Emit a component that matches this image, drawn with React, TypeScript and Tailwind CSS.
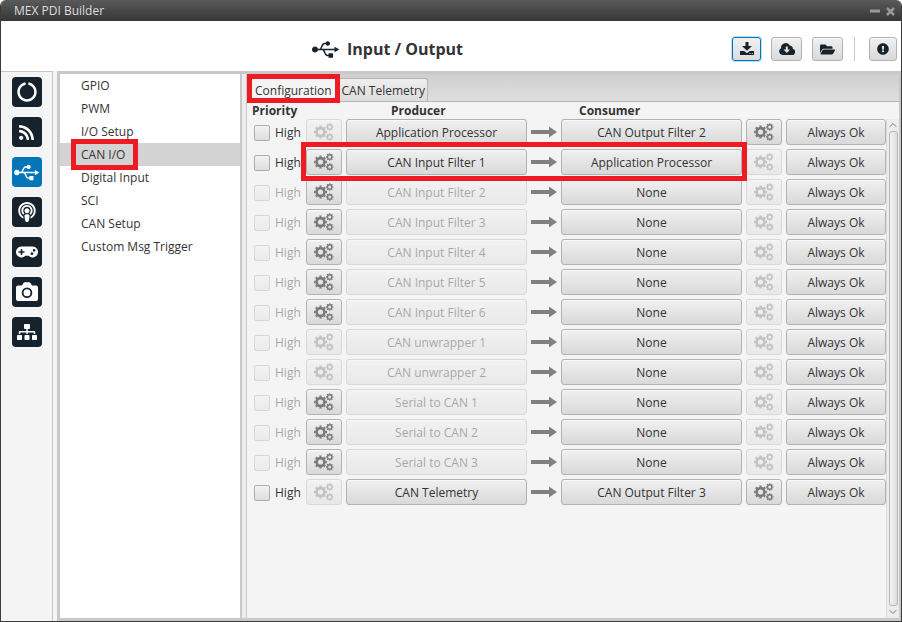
import { useState } from 'react';
import type { ReactNode } from 'react';
import clsx from 'clsx';
import { ChevronDown, ChevronUp } from 'lucide-react';
import {
  FaCircleNotch,
  FaExclamationCircle,
  FaFolderOpen,
  FaGamepad,
  FaPodcast,
  FaRss,
  FaSitemap,
  FaUsb,
} from 'react-icons/fa';

interface Route {
  producer: string;
  consumer: string;
  // which parts of the row can be edited
  producerEnabled?: boolean;
  producerConfig?: boolean;
  consumerConfig?: boolean;
  marked?: boolean;
}

const routes: Route[] = [
  { producer: 'Application Processor', consumer: 'CAN Output Filter 2', producerEnabled: true, consumerConfig: true },
  { producer: 'CAN Input Filter 1', consumer: 'Application Processor', producerEnabled: true, producerConfig: true, marked: true },
  { producer: 'CAN Input Filter 2', consumer: 'None', producerConfig: true },
  { producer: 'CAN Input Filter 3', consumer: 'None', producerConfig: true },
  { producer: 'CAN Input Filter 4', consumer: 'None', producerConfig: true },
  { producer: 'CAN Input Filter 5', consumer: 'None', producerConfig: true },
  { producer: 'CAN Input Filter 6', consumer: 'None', producerConfig: true },
  { producer: 'CAN unwrapper 1', consumer: 'None' },
  { producer: 'CAN unwrapper 2', consumer: 'None' },
  { producer: 'Serial to CAN 1', consumer: 'None', producerConfig: true },
  { producer: 'Serial to CAN 2', consumer: 'None', producerConfig: true },
  { producer: 'Serial to CAN 3', consumer: 'None', producerConfig: true },
  { producer: 'CAN Telemetry', consumer: 'CAN Output Filter 3', producerEnabled: true, consumerConfig: true },
];

const sections = ['GPIO', 'PWM', 'I/O Setup', 'CAN I/O', 'Digital Input', 'SCI', 'CAN Setup', 'Custom Msg Trigger'];

function CameraIcon() {
  return (
    <svg width="22" height="20" viewBox="0 0 22 20" fill="currentColor" aria-hidden="true">
      <path d="M2 3.500h4L7.500 1Q8 0.300 9 0.300h4q1 0 1.500 0.700L16 3.500h4q2 0 2 2V17q0 2-2 2H2q-2 0-2-2V5.500q0-2 2-2z" />
      <circle cx="11" cy="10.800" r="4.400" fill="none" stroke="#16222c" strokeWidth="1.800" />
    </svg>
  );
}

// Three gears, each a ring with eight dashes around it as teeth
function GearsIcon() {
  return (
    <svg width="20" height="18" viewBox="0 0 20 18" fill="none" stroke="#7a7a7a" aria-hidden="true">
      <circle cx="6.500" cy="9" r="3.900" strokeWidth="2.600" />
      <circle cx="6.500" cy="9" r="5.700" strokeWidth="1.700" pathLength="16" strokeDasharray="1 1" strokeDashoffset="0.500" />
      <circle cx="15.700" cy="4" r="2.200" strokeWidth="1.400" />
      <circle cx="15.700" cy="4" r="3.200" strokeWidth="1.100" pathLength="16" strokeDasharray="1 1" strokeDashoffset="0.500" />
      <circle cx="15.700" cy="14" r="2.200" strokeWidth="1.400" />
      <circle cx="15.700" cy="14" r="3.200" strokeWidth="1.100" pathLength="16" strokeDasharray="1 1" strokeDashoffset="0.500" />
    </svg>
  );
}

function DownloadIcon() {
  return (
    <svg width="14" height="14" viewBox="0 0 14 14" fill="currentColor" aria-hidden="true">
      <path d="M5.500 0h3v4H12L7 8.800 2 4h3.500z" />
      <path fillRule="evenodd" d="M0 9h4.200L7 11.200 9.800 9H14v4H0zM9.500 11v1h1v-1zM11.800 11v1h1v-1z" />
    </svg>
  );
}

function CloudDownloadIcon() {
  return (
    <svg width="16" height="12" viewBox="0 0 16 12" fill="currentColor" aria-hidden="true">
      <path
        fillRule="evenodd"
        d="M3.600 12A3.600 3.600 0 0 1 2.100 5.200 4.700 4.700 0 0 1 11 2.800a2.600 2.600 0 0 1 2.800 3.100A3.100 3.100 0 0 1 12.800 12zM6.800 3.500v3H4.500L7.800 10l3.300-3.500H8.800v-3z"
      />
    </svg>
  );
}

function ArrowIcon() {
  return (
    <svg width="26" height="12" viewBox="0 0 26 12" fill="#808080" aria-hidden="true">
      <path d="M0 4h18V0.500L26 6l-8 5.500V8H0z" />
    </svg>
  );
}

const modules = [
  { label: 'Platform', icon: <FaCircleNotch size={20} /> },
  { label: 'Sensors', icon: <FaRss size={17} /> },
  { label: 'Input / Output', icon: <FaUsb size={25} /> },
  { label: 'Communications', icon: <FaPodcast size={20} /> },
  { label: 'Stick', icon: <FaGamepad size={22} /> },
  { label: 'Camera', icon: <CameraIcon /> },
  { label: 'Hierarchy', icon: <FaSitemap size={20} /> },
];

function Marker({ className }: { className: string }) {
  return <span className={clsx('pointer-events-none absolute z-10 border-[5px] border-[#ed1c24]', className)} />;
}

interface PushButtonProps {
  children: ReactNode;
  className?: string;
  label?: string;
  disabled?: boolean;
}

function PushButton({ children, className, label, disabled }: PushButtonProps) {
  return (
    <button
      type="button"
      aria-label={label}
      disabled={disabled}
      className={clsx(
        'flex items-center justify-center rounded-[3px] border border-[#b2b2b2] bg-linear-to-b from-[#f0f0f0] to-[#d9d9d9] shadow-[inset_0_1px_0_#fafafa] disabled:opacity-40',
        className,
      )}
    >
      {children}
    </button>
  );
}

function ConfigButton({ label, enabled }: { label: string; enabled?: boolean }) {
  return (
    <PushButton label={label} disabled={!enabled} className="h-[26px] w-9 shrink-0">
      <GearsIcon />
    </PushButton>
  );
}

function RouteRow({ route }: { route: Route }) {
  return (
    <li className="flex gap-1">
      <label
        className={clsx('flex h-[26px] w-12 shrink-0 items-center gap-[5px] pt-px', !route.producerEnabled && 'opacity-40')}
      >
        <input
          type="checkbox"
          disabled={!route.producerEnabled}
          className="size-4 appearance-none rounded-[2px] border border-[#adadad] bg-linear-to-b from-[#f2f2f2] to-[#dedede] checked:bg-[#0275b8]"
        />
        High
      </label>
      <div className="relative flex flex-1 gap-1">
        <ConfigButton label={`Configure ${route.producer}`} enabled={route.producerConfig} />
        <PushButton className="h-[26px] flex-1 pt-px" disabled={!route.producerEnabled}>
          {route.producer}
        </PushButton>
        <span className="flex h-[25px] w-[26px] shrink-0 items-center">
          <ArrowIcon />
        </span>
        <PushButton className="h-[26px] flex-1 pt-px">{route.consumer}</PushButton>
        {route.marked && <Marker className="-inset-x-[5px] -top-[7px] -bottom-[6px]" />}
      </div>
      <ConfigButton label={`Configure ${route.consumer}`} enabled={route.consumerConfig} />
      <PushButton className="h-[26px] w-[100px] shrink-0 pt-px">Always Ok</PushButton>
    </li>
  );
}

export default function App() {
  const [section, setSection] = useState('CAN I/O');
  const [module, setModule] = useState('Input / Output');

  return (
    <div className="flex h-screen flex-col overflow-hidden rounded-t-md border border-t-0 border-[#3c3c3c] bg-[#f4f4f4] font-['Open_Sans','Noto_Sans',sans-serif] text-xs text-[#333]">
      {/* Title bar */}
      <div className="flex h-[21px] shrink-0 items-center justify-between bg-linear-to-b from-[#5a5a5a] to-[#363636] pt-px pr-1.5 pl-[13px] text-[#dedede]">
        <span>MEX PDI Builder</span>
        <div className="flex items-center gap-1.5 text-[#999]">
          <button type="button" aria-label="Minimize">
            <svg width="10" height="10" viewBox="0 0 10 10" stroke="currentColor" strokeWidth="3">
              <path d="M0 5h10" />
            </svg>
          </button>
          <button type="button" aria-label="Close">
            <svg width="9" height="9" viewBox="0 0 9 9" stroke="currentColor" strokeWidth="2.500">
              <path d="M1 1l7 7M8 1L1 8" />
            </svg>
          </button>
        </div>
      </div>

      {/* Header */}
      <header className="flex h-[50px] shrink-0 items-center bg-white pt-1.5 pr-1">
        <h1 className="flex flex-1 items-center justify-center gap-2 pl-[42px] text-base font-bold">
          <FaUsb size={27} className="text-[#16222c]" />
          Input / Output
        </h1>
        <div className="flex items-center text-[#16222c]">
          <button
            type="button"
            aria-label="Save"
            className="flex h-6 w-[29px] items-center justify-center rounded-[3px] border border-[#0275b8] bg-linear-to-b from-[#f0f0f0] to-[#dcdcdc] ring-1 ring-[#b9dff2]"
          >
            <DownloadIcon />
          </button>
          <PushButton label="Download" className="ml-2.5 h-6 w-[31px]">
            <CloudDownloadIcon />
          </PushButton>
          <PushButton label="Open" className="ml-2.5 h-6 w-[31px]">
            <FaFolderOpen size={15} />
          </PushButton>
          <span className="mr-3.5 ml-[11px] h-6 w-px bg-[#c8c8c8]" />
          <PushButton label="Messages" className="h-6 w-7">
            <FaExclamationCircle size={12} />
          </PushButton>
        </div>
      </header>

      <div className="flex min-h-0 flex-1">
        {/* Module bar */}
        <nav className="flex w-[52px] shrink-0 flex-col items-center gap-2.5 border-t border-r border-[#c4c4c4] pt-[5px]">
          {modules.map((m) => (
            <button
              key={m.label}
              type="button"
              aria-label={m.label}
              onClick={() => setModule(m.label)}
              className={clsx(
                'flex size-[30px] items-center justify-center rounded-[4px] text-white',
                module === m.label ? 'bg-[#0275b8]' : 'bg-[#16222c]',
              )}
            >
              {m.icon}
            </button>
          ))}
        </nav>

        <div className="ml-1 flex min-w-0 flex-1 border-t-[3px] border-r-2 border-b-[3px] border-l-[3px] border-[#c8c8c8]">
          {/* Section list */}
          <ul className="w-[180px] shrink-0 bg-white">
            {sections.map((s) => (
              <li key={s}>
                <button
                  type="button"
                  onClick={() => setSection(s)}
                  className={clsx('relative h-[23px] w-full pl-[21px] text-left', section === s && 'bg-[#d3d3d3]')}
                >
                  {s}
                  {s === 'CAN I/O' && <Marker className="-inset-y-1 left-[11px] w-[67px]" />}
                </button>
              </li>
            ))}
          </ul>
          <div className="w-[7px] shrink-0 border-r border-l-2 border-[#c8c8c8] bg-[#ececec]" />

          <main className="flex min-w-0 flex-1 flex-col">
            <div
              role="tablist"
              className="flex h-7 shrink-0 items-end gap-0.5 border-b border-[#b5b5b5] bg-linear-to-b from-[#cfcfcf] to-[#dedede] pl-[3px]"
            >
              <button
                type="button"
                role="tab"
                aria-selected="true"
                className="relative h-[23px] border border-b-0 border-[#b5b5b5] bg-[#f4f4f4] px-1 pt-0.5"
              >
                Configuration
                <Marker className="-inset-x-1 -top-[5px] -bottom-0.5" />
              </button>
              <button
                type="button"
                role="tab"
                aria-selected="false"
                className="h-[23px] rounded-tr-[3px] border border-b-0 border-[#b5b5b5] bg-linear-to-b from-[#efefef] to-[#dcdcdc] px-0.5 pt-0.5"
              >
                CAN Telemetry
              </button>
            </div>

            <div className="flex h-[17px] shrink-0 items-center pt-px pl-[5px] font-bold">
              <span className="w-[139px]">Priority</span>
              <span className="w-[188px]">Producer</span>
              <span>Consumer</span>
            </div>

            <div className="flex min-h-0 flex-1">
              <ul className="flex flex-1 flex-col gap-1 pl-[7px]">
                {routes.map((route) => (
                  <RouteRow key={route.producer} route={route} />
                ))}
              </ul>
              {/* Scroll bar */}
              <div className="flex w-[13px] shrink-0 flex-col items-center border-l border-[#dcdcdc] bg-[#ececec] text-[#777]">
                <ChevronUp size={12} />
                <div className="w-[9px] flex-1 rounded-[3px] border border-[#b5b5b5] bg-linear-to-r from-[#f4f4f4] to-[#dcdcdc]" />
                <ChevronDown size={12} />
              </div>
            </div>
          </main>
        </div>
      </div>
    </div>
  );
}
